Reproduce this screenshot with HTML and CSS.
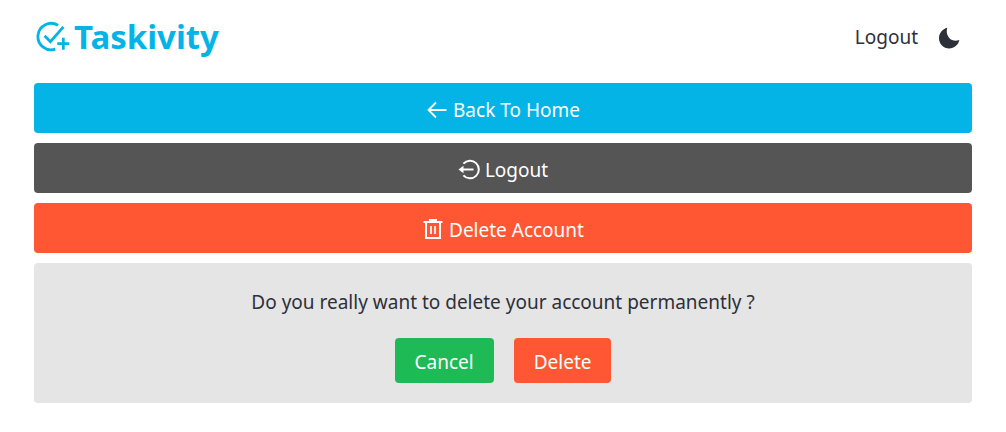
FILE: index.html
```html
<!DOCTYPE html>
<html lang="en">
<head>
<meta charset="utf-8">
<meta name="viewport" content="width=device-width, initial-scale=1">
<title>Taskivity</title>
<link rel="stylesheet" href="styles.css">
</head>
<body>
<header class="header">
  <a class="brand" href="#">
    <svg class="brand-icon" viewBox="0 0 34 34" fill="none" stroke="currentColor" stroke-width="2.8" aria-hidden="true">
      <path d="M22 5.300A13.200 13.200 0 1 0 19.300 29.100"/>
      <path d="M8.600 15.700l5.800 6L27.400 6.800"/>
      <path d="M27.300 17.700v12M21.300 23.700h12"/>
    </svg>
    <span>Taskivity</span>
  </a>
  <nav class="nav">
    <a class="nav-link" href="#">Logout</a>
    <button class="theme" type="button" aria-label="Dark mode">
      <svg class="theme-icon" viewBox="0 0 22 22" fill="currentColor" aria-hidden="true">
        <path d="M9.200.8C7.500 6.500 10.500 13.600 17.200 13.700C18.700 13.700 20.100 13.500 21.400 13C20.300 17.900 16.200 21.400 11.200 21.400C5.500 21.400 1 16.900 1 11.200C1 6.200 4.500 1.900 9.200.8Z"/>
      </svg>
    </button>
  </nav>
</header>
<main class="content">
  <button class="bar bar-home" type="button">
    <svg class="icon" viewBox="0 0 22 22" fill="none" stroke="currentColor" stroke-width="1.800" aria-hidden="true">
      <path d="M20.500 11H2.500M10 3.500L2.500 11l7.500 7.500"/>
    </svg>
    <span>Back To Home</span>
  </button>
  <button class="bar bar-logout" type="button">
    <svg class="icon" viewBox="0 0 22 22" fill="none" stroke="currentColor" stroke-width="2" aria-hidden="true">
      <path d="M5.400 4.700A8.800 8.800 0 1 1 5.400 16.300"/>
      <path d="M15.500 10.500H4"/>
      <path d="M.5 10.500L5.500 6.800V14.200Z" fill="currentColor" stroke="none"/>
    </svg>
    <span>Logout</span>
  </button>
  <button class="bar bar-delete" type="button">
    <svg class="icon" viewBox="0 0 22 22" fill="none" stroke="currentColor" stroke-width="2" aria-hidden="true">
      <path d="M1.500 3h19M7 1h8M4 3v16h14V3"/>
      <path d="M9 7v8M13 7v8" stroke-width="1.700"/>
    </svg>
    <span>Delete Account</span>
  </button>
  <section class="confirm">
    <p class="question">Do you really want to delete your account permanently ?</p>
    <div class="actions">
      <button class="action action-cancel" type="button">Cancel</button>
      <button class="action action-delete" type="button">Delete</button>
    </div>
  </section>
</main>
</body>
</html>
```
FILE: styles.css
```css
* {
  box-sizing: border-box;
}

body {
  margin: 0;
  padding: 10px 34px 28px;
  background: #fff;
  color: #2d3038;
  font: 19px/26px "Noto Sans", "Open Sans", sans-serif;
}

button {
  border: 0;
  color: inherit;
  font: inherit;
  cursor: pointer;
}

.header {
  display: flex;
  align-items: center;
  justify-content: space-between;
  height: 53px;
  padding: 0 12px 0 2px;
}

.brand {
  display: flex;
  align-items: center;
  gap: 4px;
  color: #04b4e6;
  font-size: 33px;
  font-weight: 700;
  line-height: 52px;
  text-decoration: none;
}

.brand-icon {
  width: 34px;
  height: 34px;
}

.nav {
  display: flex;
  align-items: center;
  gap: 20px;
}

.nav-link {
  color: inherit;
  text-decoration: none;
}

.theme {
  display: flex;
  padding: 2px 0 0;
  background: none;
}

.theme-icon {
  width: 22px;
  height: 22px;
}

.content {
  display: flex;
  flex-direction: column;
  gap: 10px;
  padding-top: 20px;
}

.bar {
  display: flex;
  align-items: center;
  justify-content: center;
  gap: 5px;
  padding: 14px 20px 10px;
  border-radius: 4px;
  color: #fff;
}

.bar-home {
  background: #04b4e6;
}

.bar-logout {
  background: #555;
}

.bar-delete,
.action-delete {
  background: #ff5733;
}

.icon {
  width: 22px;
  height: 22px;
}

.confirm {
  padding: 26px 20px 20px;
  border-radius: 4px;
  background: #e5e5e5;
  text-align: center;
}

.question {
  margin: 0 0 23px;
}

.actions {
  display: flex;
  justify-content: center;
  gap: 20px;
}

.action {
  padding: 11px 20px 8px;
  border-radius: 4px;
  color: #fff;
}

.action-cancel {
  background: #1eba55;
}
```
